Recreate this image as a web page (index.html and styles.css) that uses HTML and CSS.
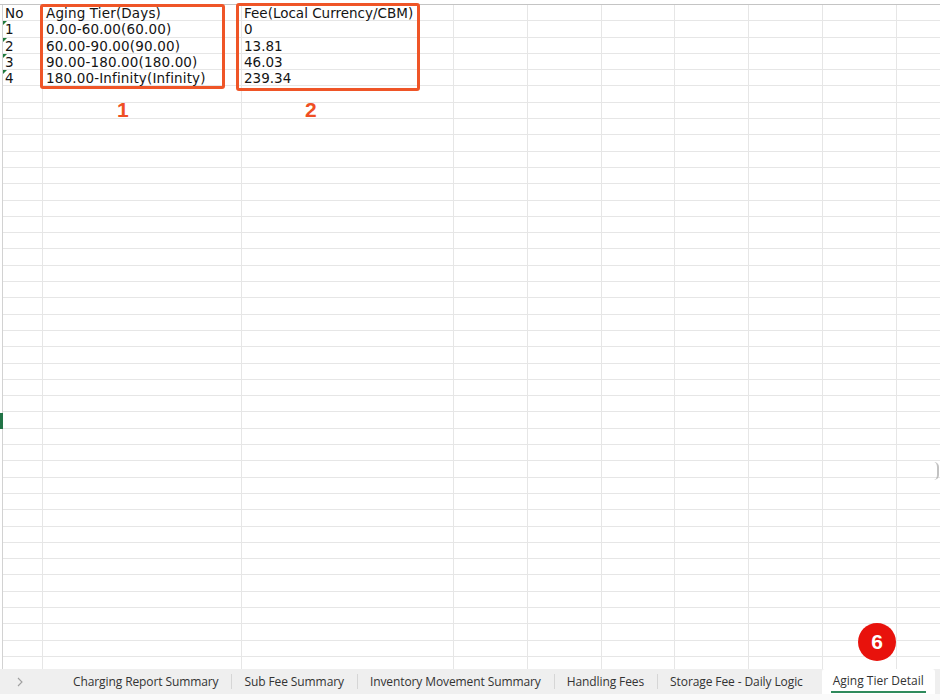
FILE: index.html
```html
<!DOCTYPE html>
<html>
<head>
<meta charset="utf-8">
<link rel="stylesheet" href="styles.css">
</head>
<body>
<div class="app">
  <div class="sheet">
    <div class="grid">
      <div class="gutter"><span class="active-row"></span></div>
      <div class="col col-a">
        <div class="cell">No</div>
        <div class="cell num">1</div>
        <div class="cell num">2</div>
        <div class="cell num">3</div>
        <div class="cell num">4</div>
      </div>
      <div class="col col-b">
        <div class="cell">Aging Tier(Days)</div>
        <div class="cell">0.00-60.00(60.00)</div>
        <div class="cell">60.00-90.00(90.00)</div>
        <div class="cell">90.00-180.00(180.00)</div>
        <div class="cell">180.00-Infinity(Infinity)</div>
      </div>
      <div class="col col-c">
        <div class="cell">Fee(Local Currency/CBM)</div>
        <div class="cell">0</div>
        <div class="cell">13.81</div>
        <div class="cell">46.03</div>
        <div class="cell">239.34</div>
      </div>
      <div class="col col-d"></div>
      <div class="col col-d"></div>
      <div class="col col-f"></div>
      <div class="col col-d"></div>
      <div class="col col-d"></div>
      <div class="col col-d"></div>
      <div class="col col-d"></div>
    </div>

    <div class="mark-box box-1"></div>
    <div class="mark-box box-2"></div>
    <div class="mark-label label-1">1</div>
    <div class="mark-label label-2">2</div>
    <div class="badge">6</div>
    <div class="edge-shadow"></div>
  </div>

  <div class="tabbar">
    <div class="tab-nav">
      <svg width="8" height="12" viewBox="0 0 8 12"><polyline points="2,2 6,6 2,10" fill="none" stroke="#a0a0a0" stroke-width="1.1"/></svg>
    </div>
    <div class="tab first">Charging Report Summary</div>
    <div class="tab">Sub Fee Summary</div>
    <div class="tab">Inventory Movement Summary</div>
    <div class="tab">Handling Fees</div>
    <div class="tab">Storage Fee - Daily Logic</div>
    <div class="tab active"><span class="tab-label">Aging Tier Detail</span></div>
  </div>
  <div class="footer-strip"></div>
</div>
</body>
</html>
```

FILE: styles.css
```css
* { box-sizing: border-box; }

html, body {
  margin: 0;
  padding: 0;
  background: #ffffff;
}

.app {
  width: 940px;
  height: 700px;
  display: flex;
  flex-direction: column;
  overflow: hidden;
}

.sheet {
  position: relative;
  height: 669px;
  padding-top: 4px;
  overflow: hidden;
}

.grid {
  display: flex;
  height: 665px;
  border-top: 1px solid #c4c4c4;
  background-image: repeating-linear-gradient(
    to bottom,
    transparent 0,
    transparent 15.3px,
    #e6e6e6 15.3px,
    #e6e6e6 16.3px
  );
}

.gutter {
  position: relative;
  flex: 0 0 3px;
  border-right: 1px solid #d2d2d2;
  background: #fff;
}

.active-row {
  position: absolute;
  left: 0;
  top: 408px;
  width: 3px;
  height: 16px;
  background: #217346;
}

.col {
  flex: 0 0 74px;
  border-right: 1px solid #e6e6e6;
}

.col-a { flex-basis: 40px; }
.col-b { flex-basis: 199px; }
.col-c { flex-basis: 212px; }
.col-d { flex-basis: 74px; }
.col-f { flex-basis: 73px; }

.cell {
  position: relative;
  height: 16.3px;
  line-height: 16.3px;
  padding-left: 3px;
  font-family: "DejaVu Sans", Verdana, sans-serif;
  font-size: 13.5px;
  letter-spacing: 0.15px;
  color: #141414;
  white-space: nowrap;
}

.col-a .cell { padding-left: 2px; }
.col-c .cell { padding-left: 2px; letter-spacing: 0; }

.cell.num::before {
  content: "";
  position: absolute;
  left: 0;
  top: 0;
  border-top: 4px solid #1f7a3c;
  border-right: 4px solid transparent;
}

.mark-box {
  position: absolute;
  border: 3px solid #ef5527;
  border-radius: 3px;
}

.box-1 { left: 40px; top: 4px; width: 185px; height: 85px; }
.box-2 { left: 236px; top: 3px; width: 184px; height: 88px; }

.mark-label {
  position: absolute;
  font-family: "Liberation Sans", Arial, sans-serif;
  font-weight: bold;
  font-size: 21px;
  line-height: 21px;
  color: #ef4f23;
}

.label-1 { left: 117px; top: 99px; }
.label-2 { left: 305px; top: 99px; }

.badge {
  position: absolute;
  left: 858px;
  top: 623px;
  width: 38px;
  height: 38px;
  border-radius: 50%;
  background: #e8120c;
  color: #ffffff;
  font-family: "Liberation Sans", Arial, sans-serif;
  font-weight: bold;
  font-size: 21px;
  line-height: 38px;
  text-align: center;
}

.edge-shadow {
  position: absolute;
  right: 1px;
  top: 462px;
  width: 5px;
  height: 18px;
  border-right: 2px solid #9a9a9a;
  border-radius: 0 8px 8px 0;
  opacity: 0.6;
}

.tabbar {
  display: flex;
  align-items: stretch;
  height: 25px;
  background: #efefef;
  font-family: "Open Sans", "Noto Sans", sans-serif;
  font-size: 12px;
  letter-spacing: -0.1px;
  color: #333333;
}

.tab-nav {
  flex: 0 0 59px;
  display: flex;
  align-items: center;
  padding-left: 16px;
}

.tab {
  display: flex;
  align-items: center;
  padding: 0 13px;
  white-space: nowrap;
  position: relative;
}

.tab + .tab::before {
  content: "";
  position: absolute;
  left: 0;
  top: 5px;
  height: 15px;
  border-left: 1px solid #d6d6d6;
}

.tab.first { padding-left: 14px; }

.tab.active {
  background: #ffffff;
  margin-left: 6px;
  padding: 0 9px;
  border-radius: 3px 3px 0 0;
}

.tab.active::before { display: none; }

.tab-label {
  display: inline-block;
  padding: 0 2px;
  line-height: 20px;
  letter-spacing: 0;
  border-bottom: 2px solid #2f8a5c;
  margin-top: 1px;
}

.footer-strip {
  flex: 1;
  background: #fafafa;
}
```
